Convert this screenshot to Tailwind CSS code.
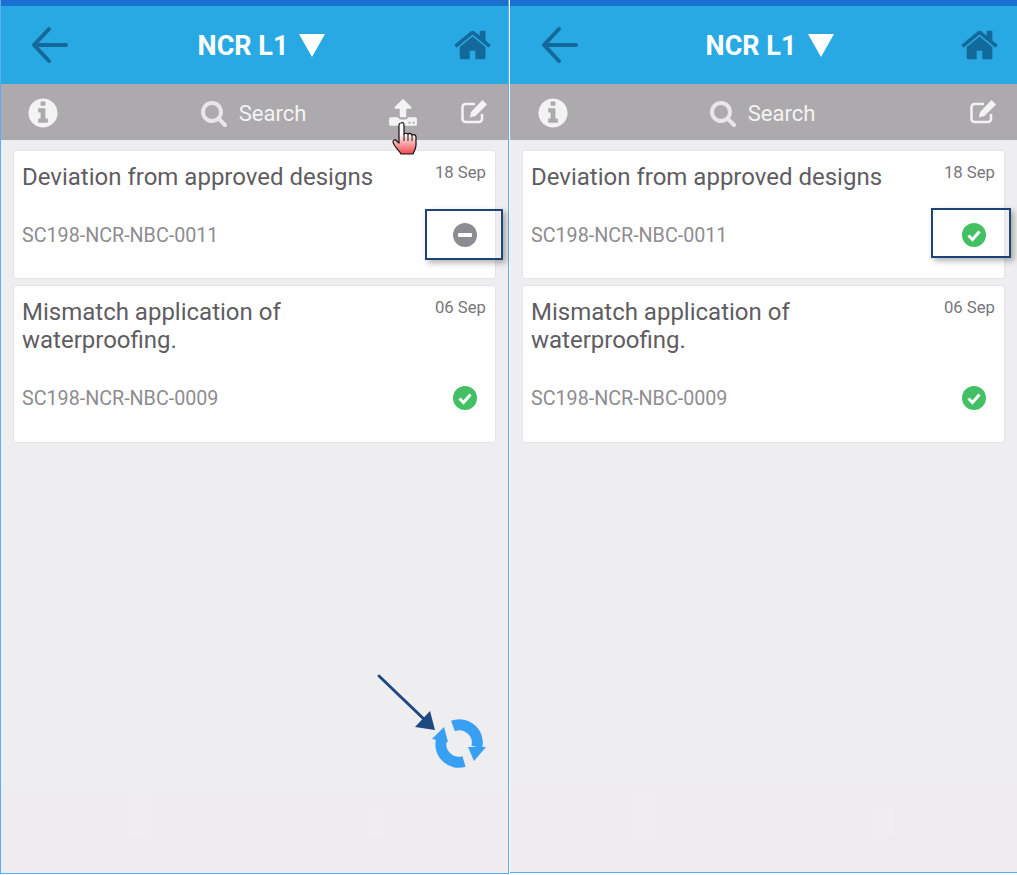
<!DOCTYPE html>
<html lang="en">

<head>
    <meta charset="UTF-8">
    <meta name="viewport" content="width=device-width, initial-scale=1.0">
    <title>NCR L1</title>
    <script src="https://cdn.jsdelivr.net/npm/@tailwindcss/browser@4"></script>
</head>

<body class="bg-white [font-family:Roboto,sans-serif]">
    <div class="flex w-[1017px] h-[875px] overflow-hidden">

        <!-- Left phone -->
        <div class="relative flex flex-col w-[509px] h-[874px] bg-[#eeedf0] border-x border-b border-[#58aef0]">
            <div class="h-[6px] bg-[#1a6fd0]"></div>
            <!-- Header -->
            <div class="flex items-center justify-between h-[78px] pl-[30px] pr-[14px] bg-[#29a9e4]">
                <svg class="w-[38px] h-[38px]" viewBox="0 0 38 38" fill="none" stroke="#14699b" stroke-width="4" stroke-linecap="round" stroke-linejoin="round">
                    <path d="M35 19H3M18 3L3 19l15 16" />
                </svg>
                <div class="flex items-center gap-[11px] text-white text-[27px] leading-none font-bold">
                    <span class="mt-[2px]">NCR L1</span>
                    <svg class="w-[26px] h-[23px]" viewBox="0 0 26 23" fill="#fff"><path d="M0 0h26L13 23z" /></svg>
                </div>
                <svg class="w-[40px] h-[40px]" viewBox="0 0 1792 1792" fill="#14699b">
                    <path d="M1408 992v480q0 26-19 45t-45 19h-384v-384h-256v384h-384q-26 0-45-19t-19-45v-480q0-1 .5-3t.5-3l575-474 575 474q1 2 1 6zm223-69l-62 74q-8 9-21 11h-3q-13 0-21-7l-692-577-692 577q-12 8-24 7-13-2-21-11l-62-74q-8-10-7-23.5t11-21.5l719-599q32-26 76-26t76 26l244 204v-195q0-14 9-23t23-9h192q14 0 23 9t9 23v408l219 182q10 8 11 21.5t-7 23.5z" />
                </svg>
            </div>
            <!-- Toolbar -->
            <div class="grid grid-cols-[1fr_auto_1fr] items-center h-[56px] pt-[2px] px-[20px] bg-[#acaaad]">
                <svg class="w-[34px] h-[34px] ml-[5px]" viewBox="0 0 1792 1792" fill="#f4f3f4">
                    <path d="M1152 1376v-160q0-14-9-23t-23-9h-96v-512q0-14-9-23t-23-9h-320q-14 0-23 9t-9 23v160q0 14 9 23t23 9h96v320h-96q-14 0-23 9t-9 23v160q0 14 9 23t23 9h448q14 0 23-9t9-23zm-128-896v-160q0-14-9-23t-23-9h-192q-14 0-23 9t-9 23v160q0 14 9 23t23 9h192q14 0 23-9t9-23zm640 416q0 209-103 385.5t-279.5 279.5-385.5 103-385.5-103-279.5-279.5-103-385.5 103-385.5 279.5-279.5 385.5-103 385.5 103 279.5 279.5 103 385.5z" />
                </svg>
                <div class="flex items-center gap-[11px] mr-[3px] text-[#f4f3f4] text-[22px] leading-none">
                    <svg class="w-[28px] h-[28px]" viewBox="0 0 1792 1792" fill="#e8e7e8">
                        <path d="M1216 832q0-185-131.5-316.5t-316.5-131.5-316.5 131.5-131.5 316.5 131.5 316.5 316.5 131.5 316.5-131.5 131.5-316.5zm512 832q0 52-38 90t-90 38q-54 0-90-38l-343-342q-179 124-399 124-143 0-273.5-55.5t-225-150-150-225-55.5-273.5 55.5-273.5 150-225 225-150 273.5-55.5 273.5 55.5 225 150 150 225 55.5 273.5q0 220-124 399l343 343q37 37 37 90z" />
                    </svg>
                    <span class="mt-[2px]">Search</span>
                </div>
                <div class="flex items-center justify-end gap-[42px]">
                    <svg class="w-[30px] h-[30px]" viewBox="0 0 1792 1792" fill="#f4f3f4">
                        <path d="M1344 1472q0-26-19-45t-45-19-45 19-19 45 19 45 45 19 45-19 19-45zm256 0q0-26-19-45t-45-19-45 19-19 45 19 45 45 19 45-19 19-45zm128-224v320q0 40-28 68t-68 28h-1472q-40 0-68-28t-28-68v-320q0-40 28-68t68-28h427q21 56 70.5 92t110.5 36h256q61 0 110.5-36t70.5-92h427q40 0 68 28t28 68zm-325-648q-17 40-59 40h-256v448q0 26-19 45t-45 19h-256q-26 0-45-19t-19-45v-448h-256q-42 0-59-40-17-39 14-69l448-448q18-19 45-19t45 19l448 448q31 30 14 69z" />
                    </svg>
                    <svg class="w-[28px] h-[28px]" viewBox="0 0 28 28">
                        <path d="M15 5H5.500A3 3 0 0 0 2.500 8v12a3 3 0 0 0 3 3H19a3 3 0 0 0 3-3v-5" fill="none" stroke="#f4f3f4" stroke-width="2.500" />
                        <path d="M22.500 1l4.500 4.500L15.500 17 10 18.500 11 13z" fill="#f4f3f4" />
                    </svg>
                </div>
            </div>
            <!-- List -->
            <div class="flex-1 flex flex-col gap-[6px] pt-[10px] pl-[12px] pr-[12px]">
                <div class="bg-white rounded-[3px] border border-[#e4e3e6] pt-[12px] pb-[30px] pl-[8px] pr-[9px]">
                    <div class="flex justify-between items-start">
                        <p class="w-[400px] text-[24px] leading-[28px] text-[#5f5d62]">Deviation from approved designs</p>
                        <span class="text-[16.7px] leading-[20px] text-[#77757a]">18 Sep</span>
                    </div>
                    <div class="flex items-center justify-between mt-[31px] pr-[9px] h-[26px]">
                        <span class="mt-[2px] text-[19.7px] text-[#8e8c90]">SC198-NCR-NBC-0011</span>
                        <svg class="w-[24px] h-[24px]" viewBox="0 0 24 24"><circle cx="12" cy="12" r="12" fill="#8e8c90" /><rect x="5" y="10" width="14" height="4" rx="1" fill="#fff" /></svg>
                    </div>
                </div>
                <div class="bg-white rounded-[3px] border border-[#e4e3e6] pt-[12px] pb-[31px] pl-[8px] pr-[9px]">
                    <div class="flex justify-between items-start">
                        <p class="w-[400px] text-[24px] leading-[28px] text-[#5f5d62]">Mismatch application of waterproofing.</p>
                        <span class="text-[16.7px] leading-[20px] text-[#77757a]">06 Sep</span>
                    </div>
                    <div class="flex items-center justify-between mt-[31px] pr-[9px] h-[26px]">
                        <span class="mt-[2px] text-[19.7px] text-[#8e8c90]">SC198-NCR-NBC-0009</span>
                        <svg class="w-[24px] h-[24px]" viewBox="0 0 24 24"><circle cx="12" cy="12" r="12" fill="#43c063" /><path d="M6.5 12.5l4 4 7-8" fill="none" stroke="#fff" stroke-width="3" /></svg>
                    </div>
                </div>
            </div>
            <!-- Faded footer -->
            <div class="flex gap-[212px] h-[87px] pt-[12px] pl-[122px] bg-[#eeecef]">
                <div class="w-[28px] h-[40px] bg-[#efedf0]"></div>
                <div class="w-[22px] h-[30px] mt-[10px] bg-[#efedf0]"></div>
            </div>

            <!-- Annotations -->
            <div class="absolute left-[424px] top-[209px] w-[78px] h-[51px] border-2 border-[#1d4478] shadow-[3px_3px_6px_rgba(0,0,0,0.3)]"></div>
            <svg class="absolute left-[391px] top-[121px] w-[26px] h-[36px]" viewBox="0 0 26 36">
                <defs>
                    <linearGradient id="hand" x1="0" y1="0" x2="0" y2="1">
                        <stop offset="0.35" stop-color="#fff" />
                        <stop offset="1" stop-color="#f0484e" />
                    </linearGradient>
                </defs>
                <path d="M9 2c2-1 3 0 3 2v9c1-1 3-1 4 0 1-1 3-1 4 1 2-1 4 0 4 2v8c0 4-2 6-3 9H9c-1-3-7-7-8-12 0-2 2-3 4-1l2 2V4c0-1 1-2 2-2z" fill="url(#hand)" stroke="#111" stroke-width="1.2" stroke-linejoin="round" />
                <path d="M12 13v7M16 13v7M20 14v6" stroke="#111" stroke-width="1" fill="none" />
            </svg>
            <svg class="absolute left-[370px] top-[668px] w-[70px] h-[70px]" viewBox="0 0 70 70">
                <path d="M8 8L56 54" stroke="#1c4a80" stroke-width="3" stroke-linecap="round" />
                <path d="M64 62L44 59 59 43z" fill="#1c4a80" />
            </svg>
            <svg class="absolute left-[428px] top-[714px] w-[60px] h-[60px]" viewBox="0 0 60 60" fill="none">
                <path d="M24 12A18 18 0 0 1 47.900 33" stroke="#37a0f2" stroke-width="11" />
                <path d="M39 33H57L45 47z" fill="#37a0f2" />
                <path d="M13 24A18 18 0 0 0 35 47.500" stroke="#37a0f2" stroke-width="11" />
                <path d="M3 25L15 13 19 28z" fill="#37a0f2" />
            </svg>
        </div>

        <div class="w-px"></div>

        <!-- Right phone -->
        <div class="relative flex flex-col w-[507px] h-[873px] bg-[#eeedf0] border-b border-[#58aef0]">
            <div class="h-[6px] bg-[#1a6fd0]"></div>
            <!-- Header -->
            <div class="flex items-center justify-between h-[78px] pl-[31px] pr-[16px] bg-[#29a9e4]">
                <svg class="w-[38px] h-[38px]" viewBox="0 0 38 38" fill="none" stroke="#14699b" stroke-width="4" stroke-linecap="round" stroke-linejoin="round">
                    <path d="M35 19H3M18 3L3 19l15 16" />
                </svg>
                <div class="flex items-center gap-3 text-white text-[27px] leading-none font-bold">
                    <span class="mt-[2px]">NCR L1</span>
                    <svg class="w-[26px] h-[23px]" viewBox="0 0 26 23" fill="#fff"><path d="M0 0h26L13 23z" /></svg>
                </div>
                <svg class="w-[40px] h-[40px]" viewBox="0 0 1792 1792" fill="#14699b">
                    <path d="M1408 992v480q0 26-19 45t-45 19h-384v-384h-256v384h-384q-26 0-45-19t-19-45v-480q0-1 .5-3t.5-3l575-474 575 474q1 2 1 6zm223-69l-62 74q-8 9-21 11h-3q-13 0-21-7l-692-577-692 577q-12 8-24 7-13-2-21-11l-62-74q-8-10-7-23.5t11-21.5l719-599q32-26 76-26t76 26l244 204v-195q0-14 9-23t23-9h192q14 0 23 9t9 23v408l219 182q10 8 11 21.5t-7 23.5z" />
                </svg>
            </div>
            <!-- Toolbar -->
            <div class="grid grid-cols-[1fr_auto_1fr] items-center h-[56px] pt-[2px] px-[20px] bg-[#acaaad]">
                <svg class="w-[34px] h-[34px] ml-[6px]" viewBox="0 0 1792 1792" fill="#f4f3f4">
                    <path d="M1152 1376v-160q0-14-9-23t-23-9h-96v-512q0-14-9-23t-23-9h-320q-14 0-23 9t-9 23v160q0 14 9 23t23 9h96v320h-96q-14 0-23 9t-9 23v160q0 14 9 23t23 9h448q14 0 23-9t9-23zm-128-896v-160q0-14-9-23t-23-9h-192q-14 0-23 9t-9 23v160q0 14 9 23t23 9h192q14 0 23-9t9-23zm640 416q0 209-103 385.5t-279.5 279.5-385.5 103-385.5-103-279.5-279.5-103-385.5 103-385.5 279.5-279.5 385.5-103 385.5 103 279.5 279.5 103 385.5z" />
                </svg>
                <div class="flex items-center gap-[11px] mr-[3px] text-[#f4f3f4] text-[22px] leading-none">
                    <svg class="w-[28px] h-[28px]" viewBox="0 0 1792 1792" fill="#e8e7e8">
                        <path d="M1216 832q0-185-131.5-316.5t-316.5-131.5-316.5 131.5-131.5 316.5 131.5 316.5 316.5 131.5 316.5-131.5 131.5-316.5zm512 832q0 52-38 90t-90 38q-54 0-90-38l-343-342q-179 124-399 124-143 0-273.5-55.5t-225-150-150-225-55.5-273.5 55.5-273.5 150-225 225-150 273.5-55.5 273.5 55.5 225 150 150 225 55.5 273.5q0 220-124 399l343 343q37 37 37 90z" />
                    </svg>
                    <span class="mt-[2px]">Search</span>
                </div>
                <div class="flex items-center justify-end">
                    <svg class="w-[28px] h-[28px]" viewBox="0 0 28 28">
                        <path d="M15 5H5.500A3 3 0 0 0 2.500 8v12a3 3 0 0 0 3 3H19a3 3 0 0 0 3-3v-5" fill="none" stroke="#f4f3f4" stroke-width="2.500" />
                        <path d="M22.500 1l4.500 4.500L15.500 17 10 18.500 11 13z" fill="#f4f3f4" />
                    </svg>
                </div>
            </div>
            <!-- List -->
            <div class="flex-1 flex flex-col gap-[6px] pt-[10px] pl-[12px] pr-[12px]">
                <div class="bg-white rounded-[3px] border border-[#e4e3e6] pt-[12px] pb-[30px] pl-[8px] pr-[9px]">
                    <div class="flex justify-between items-start">
                        <p class="w-[400px] text-[24px] leading-[28px] text-[#5f5d62]">Deviation from approved designs</p>
                        <span class="text-[16.7px] leading-[20px] text-[#77757a]">18 Sep</span>
                    </div>
                    <div class="flex items-center justify-between mt-[31px] pr-[9px] h-[26px]">
                        <span class="mt-[2px] text-[19.7px] text-[#8e8c90]">SC198-NCR-NBC-0011</span>
                        <svg class="w-[24px] h-[24px]" viewBox="0 0 24 24"><circle cx="12" cy="12" r="12" fill="#43c063" /><path d="M6.5 12.5l4 4 7-8" fill="none" stroke="#fff" stroke-width="3" /></svg>
                    </div>
                </div>
                <div class="bg-white rounded-[3px] border border-[#e4e3e6] pt-[12px] pb-[31px] pl-[8px] pr-[9px]">
                    <div class="flex justify-between items-start">
                        <p class="w-[400px] text-[24px] leading-[28px] text-[#5f5d62]">Mismatch application of waterproofing.</p>
                        <span class="text-[16.7px] leading-[20px] text-[#77757a]">06 Sep</span>
                    </div>
                    <div class="flex items-center justify-between mt-[31px] pr-[9px] h-[26px]">
                        <span class="mt-[2px] text-[19.7px] text-[#8e8c90]">SC198-NCR-NBC-0009</span>
                        <svg class="w-[24px] h-[24px]" viewBox="0 0 24 24"><circle cx="12" cy="12" r="12" fill="#43c063" /><path d="M6.5 12.5l4 4 7-8" fill="none" stroke="#fff" stroke-width="3" /></svg>
                    </div>
                </div>
            </div>
            <!-- Faded footer -->
            <div class="flex gap-[212px] h-[87px] pt-[12px] pl-[122px] bg-[#eeecef]">
                <div class="w-[28px] h-[40px] bg-[#efedf0]"></div>
                <div class="w-[22px] h-[30px] mt-[10px] bg-[#efedf0]"></div>
            </div>

            <!-- Annotation -->
            <div class="absolute left-[421px] top-[208px] w-[80px] h-[50px] border-2 border-[#1d4478] shadow-[3px_3px_6px_rgba(0,0,0,0.3)]"></div>
        </div>
    </div>
</body>

</html>
